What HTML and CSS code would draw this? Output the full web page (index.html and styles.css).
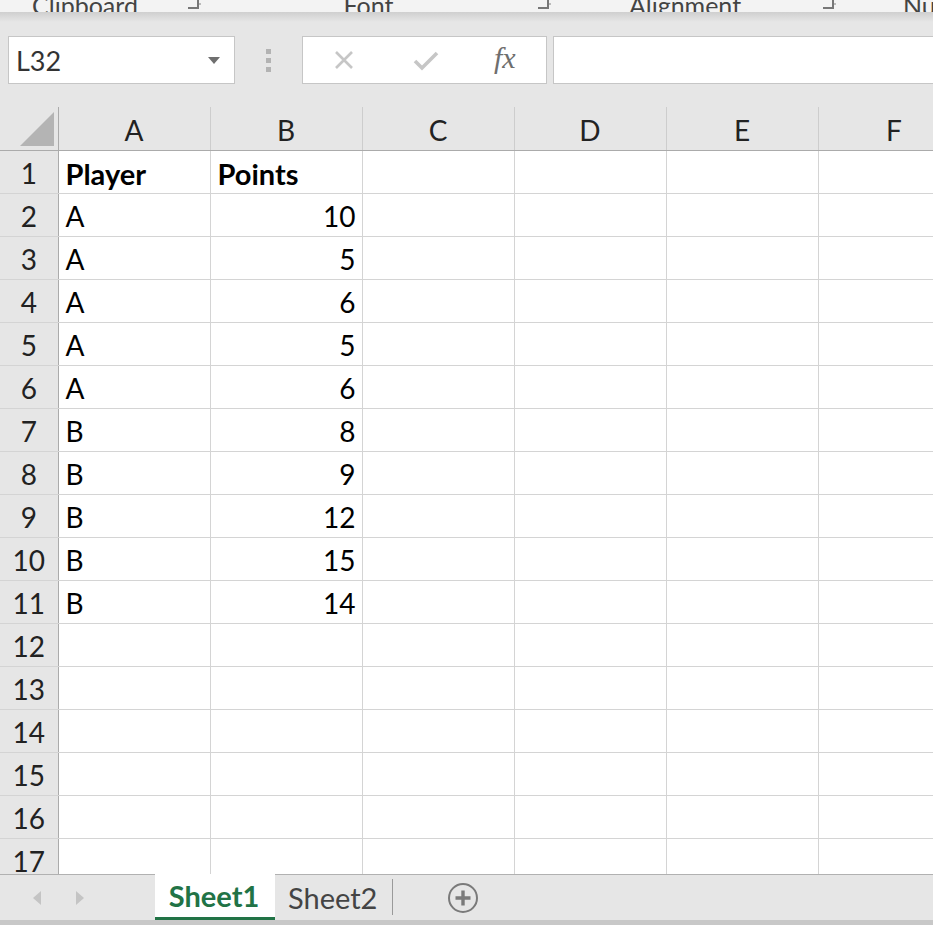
FILE: index.html
```html
<!DOCTYPE html>
<html lang="en">
<head>
    <meta charset="UTF-8">
    <title>Book1 - Excel</title>
    <link rel="stylesheet" href="styles.css">
</head>
<body>
    <div class="ribbon">
        <div class="rgroup g1"><span class="label">Clipboard</span><span class="launcher"></span></div>
        <div class="rgroup g2"><span class="label">Font</span><span class="launcher"></span></div>
        <div class="rgroup g3"><span class="label">Alignment</span><span class="launcher"></span></div>
        <div class="rgroup g4"><span class="label">Number</span></div>
    </div>
    <div class="ribbon-shadow"></div>

    <div class="formula-bar">
        <div class="name-box">
            <span>L32</span>
            <svg class="drop" width="12" height="7" viewBox="0 0 12 7"><path d="M0 0h12L6 7z" fill="#6f6f6f"/></svg>
        </div>
        <div class="grip"><i></i><i></i><i></i></div>
        <div class="fx-buttons">
            <svg class="cancel" width="22" height="22" viewBox="0 0 22 22"><path d="M3 3l16 16M19 3L3 19" stroke="#c6c6c6" stroke-width="2.6"/></svg>
            <svg class="enter" width="26" height="22" viewBox="0 0 26 22"><path d="M2 12l7 7L24 4" stroke="#c6c6c6" stroke-width="3.6" fill="none"/></svg>
            <span class="fx">fx</span>
        </div>
        <div class="formula-input"></div>
    </div>

    <div class="sheet">
        <table class="grid">
            <colgroup>
                <col class="c-head"><col class="c"><col class="c"><col class="c"><col class="c"><col class="c"><col class="c">
            </colgroup>
            <tr class="col-heads">
                <th class="corner"><span class="tri"></span></th><th>A</th><th>B</th><th>C</th><th>D</th><th>E</th><th>F</th>
            </tr>
            <tr><th>1</th><td class="bold">Player</td><td class="bold">Points</td><td></td><td></td><td></td><td></td></tr>
            <tr><th>2</th><td>A</td><td class="num">10</td><td></td><td></td><td></td><td></td></tr>
            <tr><th>3</th><td>A</td><td class="num">5</td><td></td><td></td><td></td><td></td></tr>
            <tr><th>4</th><td>A</td><td class="num">6</td><td></td><td></td><td></td><td></td></tr>
            <tr><th>5</th><td>A</td><td class="num">5</td><td></td><td></td><td></td><td></td></tr>
            <tr><th>6</th><td>A</td><td class="num">6</td><td></td><td></td><td></td><td></td></tr>
            <tr><th>7</th><td>B</td><td class="num">8</td><td></td><td></td><td></td><td></td></tr>
            <tr><th>8</th><td>B</td><td class="num">9</td><td></td><td></td><td></td><td></td></tr>
            <tr><th>9</th><td>B</td><td class="num">12</td><td></td><td></td><td></td><td></td></tr>
            <tr><th>10</th><td>B</td><td class="num">15</td><td></td><td></td><td></td><td></td></tr>
            <tr><th>11</th><td>B</td><td class="num">14</td><td></td><td></td><td></td><td></td></tr>
            <tr><th>12</th><td></td><td></td><td></td><td></td><td></td><td></td></tr>
            <tr><th>13</th><td></td><td></td><td></td><td></td><td></td><td></td></tr>
            <tr><th>14</th><td></td><td></td><td></td><td></td><td></td><td></td></tr>
            <tr><th>15</th><td></td><td></td><td></td><td></td><td></td><td></td></tr>
            <tr><th>16</th><td></td><td></td><td></td><td></td><td></td><td></td></tr>
            <tr><th>17</th><td></td><td></td><td></td><td></td><td></td><td></td></tr>
        </table>
    </div>

    <div class="tab-bar">
        <div class="nav">
            <svg width="10" height="16" viewBox="0 0 10 16"><path d="M9 1L1 8l8 7z" fill="#c4c4c4"/></svg>
            <svg width="10" height="16" viewBox="0 0 10 16"><path d="M1 1l8 7-8 7z" fill="#c4c4c4"/></svg>
        </div>
        <div class="tab active">Sheet1</div>
        <div class="tab">Sheet2</div>
        <div class="tab-sep"></div>
        <svg class="add" width="32" height="32" viewBox="0 0 32 32">
            <circle cx="16" cy="16" r="14" fill="none" stroke="#7a7a7a" stroke-width="2"/>
            <path d="M16 8.5v15M8.5 16h15" stroke="#7a7a7a" stroke-width="3.4"/>
        </svg>
    </div>
    <div class="status-edge"></div>
</body>
</html>
```

FILE: styles.css
```css
:root {
    --chrome: #e6e6e6;
    --ribbon: #f3f3f3;
    --grid-line: #d4d4d4;
    --head-line: #ababab;
    --green: #217346;
}
* {
    box-sizing: border-box;
}
body {
    margin: 0;
    width: 933px;
    height: 925px;
    overflow: hidden;
    background: var(--chrome);
    font-family: Lato, "Open Sans", sans-serif;
    color: #000;
}

/* ribbon group captions, only their lower half is on screen */
.ribbon {
    height: 12px;
    background: var(--ribbon);
    overflow: hidden;
    display: flex;
    align-items: flex-end;
    font-size: 25px;
    color: #444;
    white-space: nowrap;
}
.rgroup {
    display: flex;
    align-items: flex-end;
    flex-shrink: 0;
}
.g1 { width: 205px; }
.g2 { width: 350px; }
.g3 { width: 285px; }
.g4 { width: 200px; padding-left: 63px; }
.label {
    flex: 1;
    text-align: center;
    line-height: 1;
    margin-bottom: -6px;
}
.g1 .label { padding-right: 18px; }
.g2 .label { padding-right: 6px; }
.g3 .label { padding-right: 8px; }
.g4 .label { flex: none; }
.launcher {
    width: 11px;
    height: 10px;
    margin: 0 6px 3px 0;
    border-right: 2px solid #777;
    border-bottom: 2px solid #777;
    box-shadow: 6px 0 0 -4px #bbb;
}
.ribbon-shadow {
    height: 10px;
    background: linear-gradient(#cfcfcf, var(--chrome));
}

/* name box and formula bar */
.formula-bar {
    display: flex;
    align-items: center;
    height: 48px;
    margin-top: 14px;
    padding-left: 8px;
}
.name-box {
    width: 227px;
    height: 48px;
    background: #fff;
    border: 1px solid #c6c6c6;
    display: flex;
    align-items: center;
    justify-content: space-between;
    padding: 0 14px 0 7px;
    font-size: 27px;
    color: #333;
}
.grip {
    width: 67px;
    display: flex;
    flex-direction: column;
    align-items: center;
    gap: 4px;
}
.grip i {
    width: 5px;
    height: 5px;
    background: #b3b3b3;
}
.fx-buttons {
    width: 245px;
    height: 48px;
    background: #fff;
    border: 1px solid #c6c6c6;
    display: flex;
    align-items: center;
    padding-left: 30px;
}
.enter {
    margin-left: 58px;
}
.fx {
    margin-left: 55px;
    font-family: "Liberation Serif", serif;
    font-style: italic;
    font-size: 30px;
    color: #6e6e6e;
    margin-bottom: 4px;
}
.formula-input {
    flex: 1;
    height: 48px;
    margin-left: 6px;
    background: #fff;
    border: 1px solid #c6c6c6;
    border-right: none;
}

/* worksheet grid */
.sheet {
    margin-top: 23px;
    height: 767px;
    overflow: hidden;
    background: #fff;
}
.grid {
    border-collapse: collapse;
    table-layout: fixed;
    width: 970px;
    font-size: 28px;
}
.c-head { width: 58px; }
.c { width: 152px; }
.grid tr {
    height: 43px;
}
.grid td {
    border: 1px solid var(--grid-line);
    padding: 3px 7px 0;
    line-height: 1;
    vertical-align: middle;
    white-space: nowrap;
}
.grid th {
    background: var(--chrome);
    font-weight: normal;
    border: 1px solid var(--grid-line);
    border-right-color: var(--head-line);
    padding: 3px 0 0;
    line-height: 1;
    color: #222;
}
.col-heads th {
    border-bottom-color: var(--head-line);
    border-right-color: #cdcdcd;
    border-top: none;
}
.col-heads th.corner {
    border-right-color: var(--head-line);
    position: relative;
}
.tri {
    position: absolute;
    right: 4px;
    bottom: 4px;
    width: 0;
    height: 0;
    border-left: 34px solid transparent;
    border-bottom: 34px solid #b4b4b4;
}
.grid th:first-child {
    border-left: none;
}
.grid .bold {
    font-weight: bold;
    font-size: 29px;
}
.grid .num {
    text-align: right;
    padding-right: 6px;
}

/* sheet tabs */
.tab-bar {
    height: 46px;
    border-top: 1px solid #b1b1b1;
    display: flex;
    align-items: stretch;
}
.nav {
    width: 155px;
    display: flex;
    align-items: center;
    gap: 33px;
    padding-left: 32px;
}
.tab {
    font-size: 29px;
    color: #444;
    display: flex;
    align-items: center;
    padding: 0 15px 0 13px;
}
.tab.active {
    width: 120px;
    justify-content: center;
    background: #fff;
    color: var(--green);
    font-weight: bold;
    margin-top: -1px;
    border-bottom: 3px solid var(--green);
}
.tab-sep {
    width: 1px;
    background: #9a9a9a;
    margin: 4px 0 5px;
}
.add {
    align-self: center;
    margin-left: 54px;
}
.status-edge {
    height: 5px;
    background: #c8c8c8;
}
```
